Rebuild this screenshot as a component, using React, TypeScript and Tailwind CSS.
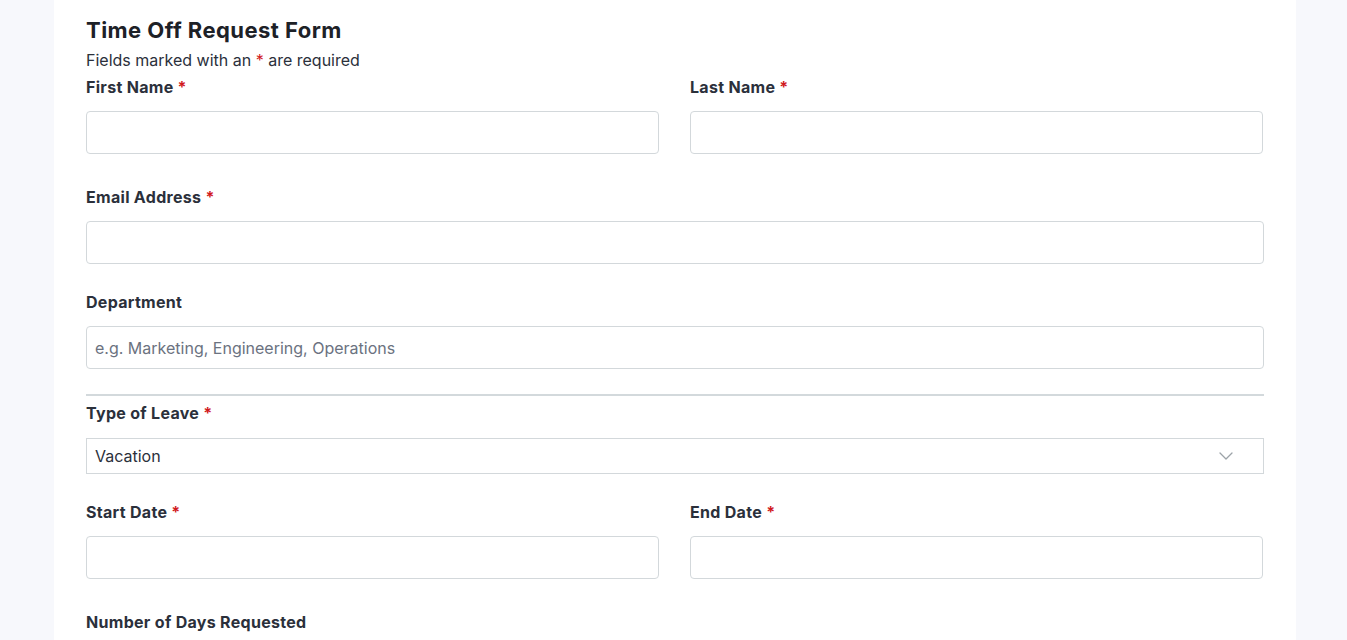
function Req() {
  return <span className="text-[#d1191d]"> *</span>
}

function Label({ children, required }: { children: string; required?: boolean }) {
  return (
    <label className="block h-6 text-[16px] font-bold leading-6 tracking-[0.3px] text-[#2b303b]">
      {children}
      {required && <Req />}
    </label>
  )
}

function TextField({ label, required, placeholder }: { label: string; required?: boolean; placeholder?: string }) {
  return (
    <div>
      <Label required={required}>{label}</Label>
      <input
        type="text"
        placeholder={placeholder}
        className="mt-3 block h-[43px] w-full rounded-[4px] border border-[#d3d8db] bg-white px-2 text-[16px] text-[#2b303b] outline-none placeholder:text-[#6b7280]"
      />
    </div>
  )
}

export default function App() {
  return (
    <div className="min-h-screen bg-[#f7f8fc]" style={{ fontFamily: 'Inter, "Noto Sans", sans-serif' }}>
      <div className="ml-[54px] min-h-screen w-[1242px] bg-white px-8 pt-4">
        <h1 className="text-[22px] font-bold leading-7 tracking-[0.45px] text-[#1d2127]">Time Off Request Form</h1>
        <p className="mt-1 text-[16px] leading-6 text-[#2b303b]">
          Fields marked with an <span className="text-[#d1191d]">*</span> are required
        </p>

        <div className="mt-[3px] grid grid-cols-[573px_573px] gap-[31px]">
          <TextField label="First Name" required />
          <TextField label="Last Name" required />
        </div>

        <div className="mt-[31px]">
          <TextField label="Email Address" required />
        </div>

        <div className="mt-[26px]">
          <TextField label="Department" placeholder="e.g. Marketing, Engineering, Operations" />
        </div>

        <hr className="mt-[25px] border-t-2 border-[#d3d9dc]" />

        <div className="mt-[5px]">
          <Label required>Type of Leave</Label>
          <div className="relative mt-[13px]">
            <select className="block h-9 w-full appearance-none rounded-none border border-[#d3d8db] bg-white px-2 text-[16px] text-[#2b303b] outline-none">
              <option>Vacation</option>
              <option>Sick Leave</option>
              <option>Personal</option>
            </select>
            {/* chevron */}
            <svg
              className="pointer-events-none absolute right-[31px] top-[14px]"
              width="14"
              height="8"
              viewBox="0 0 14 8"
              fill="none"
            >
              <path d="M1 1l6 6 6-6" stroke="#9ca3a8" strokeWidth="1.3" strokeLinecap="round" strokeLinejoin="round" />
            </svg>
          </div>
        </div>

        <div className="mt-[26px] grid grid-cols-[573px_573px] gap-[31px]">
          <TextField label="Start Date" required />
          <TextField label="End Date" required />
        </div>

        <div className="mt-[31px]">
          <TextField label="Number of Days Requested" />
        </div>
      </div>
    </div>
  )
}
